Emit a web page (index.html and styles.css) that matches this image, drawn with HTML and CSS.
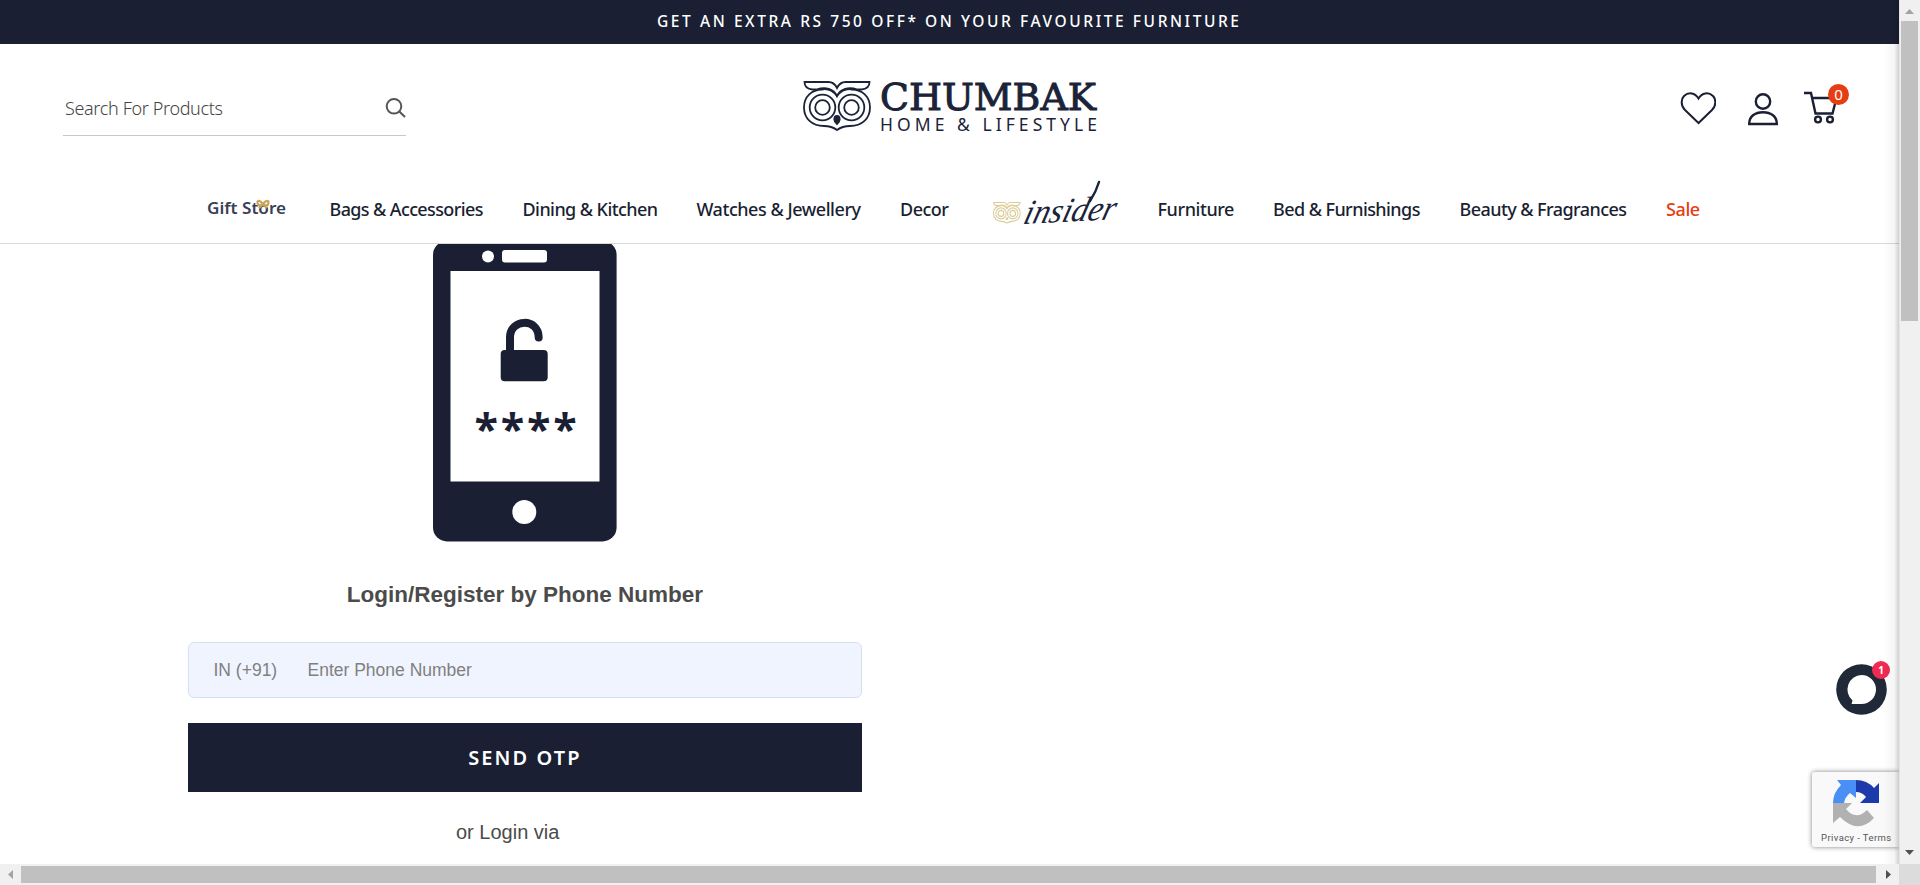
FILE: index.html
```html
<!DOCTYPE html>
<html lang="en">
<head>
<meta charset="utf-8">
<title>Chumbak - Login</title>
<link rel="stylesheet" href="styles.css">
</head>
<body>
<div class="frame">
  <div class="page">
    <div class="promo"><svg width="600" height="44"><text class="promo-text" x="7" y="27" textLength="582">GET AN EXTRA RS 750 OFF* ON YOUR FAVOURITE FURNITURE</text></svg></div>
    <header class="header">
      <div class="top-row">
        <div class="search">
          <span class="search-label">Search For Products</span>
          <svg class="search-icon" width="22" height="22" viewBox="0 0 22 22"><circle cx="10" cy="9.3" r="7.3"/><path d="M15.3 14.600L21 20"/></svg>
        </div>
        <svg class="logo" width="300" height="60" viewBox="800 76 300 60">
          <g class="owl">
            <path d="M804.5 82h24c4 0 7 3 8.500 6 1.500-3 4.500-6 8.500-6h24c0 5-3 7-8 7.500h-4c-9-3-17-1-20.500 6.500-3.500-7.500-11.500-9.500-20.500-6.500h-4c-5-.5-8-2.500-8-7.500z"/>
            <path d="M837 96c-4-5-10-7.500-15-6.500-10 0-18 7-18 18 0 11 8 18.500 20 18.500 6 0 9 1 13 4 4-3 7-4 13-4 12 0 20-7.500 20-18.500 0-11-8-18-18-18-5-1-11 1.500-15 6.500z"/>
            <circle cx="822.500" cy="107.500" r="12.800"/><circle cx="822.500" cy="107.500" r="7.300"/>
            <circle cx="851.500" cy="107.500" r="12.800"/><circle cx="851.500" cy="107.500" r="7.300"/>
            <path class="beak" d="M837 116c2 0 2.700 1.500 2.700 3.500s-1.500 3.500-2.700 4.500c-1.200-1-2.700-2.500-2.700-4.500s.7-3.500 2.700-3.500z"/>
          </g>
          <text class="brand" x="880" y="109.500" textLength="216" lengthAdjust="spacingAndGlyphs">CHUMBAK</text>
          <text class="tagline" x="880" y="130.500" textLength="217">HOME &amp; LIFESTYLE</text>
        </svg>
        <div class="actions">
          <svg width="36" height="34" viewBox="0 0 36 34"><path d="M18.500 32L5 19C.5 14.500 1 8 4 5 8.500 .8 15 1.500 18.500 7.500 22 1.500 28.500 .8 33 5c3 3 3.500 9.500-1 14z"/></svg>
          <svg class="user" width="30" height="34" viewBox="0 0 30 34"><circle cx="15" cy="8.500" r="7.200"/><path d="M1.200 31C1 23.500 7 19.200 15 19.200s14 4.300 13.800 11.800z"/></svg>
          <div class="cart">
            <svg width="36" height="34" viewBox="0 0 36 34"><path d="M0 2h7l4.500 20.500h17L32.500 7H8"/><circle cx="14" cy="28.500" r="2.900"/><circle cx="26" cy="28.500" r="2.900"/></svg>
            <span class="cart-count">0</span>
          </div>
        </div>
      </div>
      <nav class="nav">
        <svg class="gift" width="80" height="30" viewBox="0 0 80 30"><text x="0" y="19.500" textLength="79" lengthAdjust="spacingAndGlyphs">Gift Store</text><path d="M56 10c-3-4-6-4-5.500-1s3 3 5.500 1c3-4 6-4 5.500-1s-3 3-5.500 1l-4 4M56 10l4 4"/></svg>
        <a class="bags">Bags &amp; Accessories</a>
        <a class="dining">Dining &amp; Kitchen</a>
        <a class="watches">Watches &amp; Jewellery</a>
        <a class="decor">Decor</a>
        <svg class="insider" width="126" height="52" viewBox="992 178 126 52">
          <g class="mini-owl" transform="translate(993.5 201) scale(.405 .43) translate(-804 -81)">
            <path d="M804.5 82h24c4 0 7 3 8.500 6 1.500-3 4.500-6 8.500-6h24c0 5-3 7-8 7.500h-4c-9-3-17-1-20.500 6.500-3.500-7.500-11.500-9.500-20.500-6.500h-4c-5-.5-8-2.500-8-7.500z"/>
            <path d="M837 96c-4-5-10-7.500-15-6.500-10 0-18 7-18 18 0 11 8 18.500 20 18.500 6 0 9 1 13 4 4-3 7-4 13-4 12 0 20-7.500 20-18.500 0-11-8-18-18-18-5-1-11 1.500-15 6.500z"/>
            <circle cx="822.500" cy="107.500" r="12.800"/><circle cx="822.500" cy="107.500" r="7"/>
            <circle cx="851.500" cy="107.500" r="12.800"/><circle cx="851.500" cy="107.500" r="7"/>
            <circle cx="837" cy="120" r="2"/>
          </g>
          <text class="script" transform="translate(1022 223) skewX(-18) rotate(-3)" textLength="90" lengthAdjust="spacingAndGlyphs">insider</text>
          <path class="swash" d="M1090 200Q1096 191 1099 181"/>
        </svg>
        <a class="furniture">Furniture</a>
        <a class="bed">Bed &amp; Furnishings</a>
        <a class="beauty">Beauty &amp; Fragrances</a>
        <a class="sale">Sale</a>
      </nav>
    </header>
    <main class="login">
      <svg class="phone" width="184" height="298" viewBox="433 244 184 298">
        <rect x="433" y="241" width="183.600" height="300.400" rx="14"/>
        <path class="white" d="M450.500 271h149v210.500h-149z"/>
        <circle class="white" cx="488" cy="256.500" r="6"/>
        <rect class="white" x="502" y="250" width="45" height="12.500" rx="3"/>
        <circle class="white" cx="524.300" cy="512" r="12"/>
        <rect x="500.700" y="350" width="47" height="31.300" rx="4"/>
        <path class="shackle" d="M510 353V337.500c0-19 28.500-20 28.700 0"/>
        <text x="474.500 500.700 526.900 553.200" y="445">****</text>
      </svg>
      <h1>Login/Register by Phone Number</h1>
      <div class="field"><span class="code">IN (+91)</span><span>Enter Phone Number</span></div>
      <div class="send">SEND OTP</div>
      <p class="via">or Login via</p>
    </main>
    <aside class="floating">
      <div class="chat">
        <svg width="51" height="51" viewBox="0 0 51 51"><circle cx="25.500" cy="25.500" r="25.300"/><path d="M25.500 11a14.500 14.500 0 1 1 0 29H15.500l1-3.500A14.500 14.500 0 0 1 25.500 11z"/></svg>
        <span class="chat-count">1</span>
      </div>
      <div class="captcha">
        <svg width="48" height="48" viewBox="0 0 48 48">
          <path fill="#4a8ff5" d="M5 1h19v18l-6-5q-5 4-6 10H1Q1 14 9 6z"/>
          <path fill="#1c3aa9" d="M24 1q11 0 18 8l5-5v20H28l6-6q-4-5-10-5z"/>
          <path fill="#b1b1b1" d="M1 24h19l-6 6q10 12 21 1l7 8Q26 56 8 38l-7 6z"/>
        </svg>
        <span class="terms">Privacy - Terms</span>
      </div>
    </aside>
  </div>
  <div class="scroll-v">
    <svg width="21" height="21"><path fill="#a3a3a3" d="M5 14h9l-4.500-5z"/></svg>
    <div class="thumb-v"></div>
    <svg class="end" width="21" height="21"><path fill="#505050" d="M5 7h9l-4.500 5z"/></svg>
  </div>
  <div class="scroll-h">
    <svg width="21" height="21"><path fill="#a3a3a3" d="M13 6v9l-5-4.500z"/></svg>
    <div class="thumb-h"></div>
    <svg class="end" width="23" height="21"><path fill="#505050" d="M10 6v9l5-4.500z"/></svg>
  </div>
  <div class="corner"></div>
</div>
</body>
</html>
```
FILE: styles.css
```css
* { box-sizing: border-box; }
body { margin: 0; background: #fff; overflow: hidden; font-family: "Noto Sans", sans-serif; color: #1a1f33; }
svg { display: block; flex: none; }
.frame { display: grid; grid-template-columns: 1899px 21px; grid-template-rows: 864px 21px; width: 1920px; height: 885px; }
.page { position: relative; overflow: hidden; }
.page::after { content: ""; position: absolute; top: 0; right: 0; bottom: 0; width: 16px; background: linear-gradient(to right, rgba(0,0,0,0), rgba(0,0,0,.04) 70%, rgba(0,0,0,.18)); }
.promo { height: 44px; background: #1a1f33; display: flex; justify-content: center; }
.promo-text { fill: #fff; font-size: 15.500px; font-weight: 500; }
.header { height: 200px; border-bottom: 1px solid #d9d9d9; }
.top-row { height: 131px; display: grid; grid-template-columns: 800px 300px 1fr; padding-top: 32px; }
.search { margin: 14px 0 0 63px; width: 343px; height: 46px; border-bottom: 1px solid #c8c8c8; padding: 0 0 9px 2px; display: flex; align-items: center; justify-content: space-between; }
.search-label { font-size: 18px; font-weight: 300; color: #444; letter-spacing: -.35px; }
.search-icon { fill: none; stroke: #555; stroke-width: 2; }
.owl { fill: none; stroke: #1b2339; stroke-width: 1.800; }
.owl .beak { fill: #1b2339; }
.brand { font: 37.500px "DejaVu Serif", serif; fill: #1b2339; stroke: #1b2339; stroke-width: 1; }
.tagline { font-size: 17.500px; fill: #1b2339; }
.actions { display: flex; align-items: flex-start; padding: 15px 0 0 580px; fill: none; stroke: #1a1f33; stroke-width: 2; }
.user { margin: 2px 0 0 32px; stroke-width: 2.400; }
.cart { position: relative; margin: 0 0 0 26px; stroke-width: 2.400; }
.cart-count { position: absolute; left: 24px; top: -7px; width: 21px; height: 21px; border-radius: 50%; background: #e63e12; color: #fff; font-size: 15px; line-height: 21px; text-align: center; }
.nav { height: 68px; display: flex; align-items: center; padding-left: 207px; font-size: 18px; font-weight: 500; letter-spacing: -.57px; white-space: nowrap; }
.nav a { flex: none; }
.gift { margin: 0 42.500px 1px 0; letter-spacing: 0; }
.gift text { font-size: 16.500px; font-weight: 600; fill: #394055; }
.gift path { fill: none; stroke: #c9a55a; stroke-width: 2.200; }
.bags { width: 193px; letter-spacing: -.62px; }
.dining { width: 174px; }
.watches { width: 203.500px; letter-spacing: -.46px; }
.decor { width: 92px; letter-spacing: -.5px; }
.insider { margin: -8px 39.500px 0 0; overflow: visible; letter-spacing: 0; }
.mini-owl { fill: none; stroke: #dccb98; stroke-width: 2.500; }
.script { font: italic 35px "Liberation Serif", serif; fill: #1b2339; }
.swash { fill: none; stroke: #1b2339; stroke-width: 2.400; stroke-linecap: round; }
.furniture { width: 115.500px; letter-spacing: -.42px; }
.bed { width: 186.500px; }
.beauty { width: 206.500px; }
.sale { color: #e63e12; letter-spacing: -.4px; }
.login { margin-left: 188px; width: 674px; font-family: "Liberation Sans", sans-serif; color: #4b4b4b; }
.phone { margin-left: 245px; fill: #1a1f33; }
.phone .white { fill: #fff; }
.phone .shackle { fill: none; stroke: #1a1f33; stroke-width: 8; stroke-linecap: round; }
.phone text { font: bold 43px "Open Sans", sans-serif; }
h1 { margin: 39px 0 0; font-size: 22.500px; line-height: 28px; text-align: center; }
.field { margin-top: 33px; height: 56px; border: 1px solid #d8dff2; border-radius: 6px; background: #f0f4ff; padding-left: 24.500px; display: flex; align-items: center; font-size: 17.500px; color: #808080; }
.code { width: 94px; }
.send { margin-top: 25px; height: 69px; background: #1a1f33; color: #fff; font: 600 20px/69px "Noto Sans", sans-serif; letter-spacing: 2.100px; text-align: center; }
.via { margin: 28px 0 0 268px; font-size: 20px; line-height: 24px; }
.floating { position: absolute; right: 0; top: 664px; width: 87px; }
.chat { position: relative; margin-left: 24px; width: 51px; height: 51px; }
.chat circle { fill: #1f2937; }
.chat path { fill: #fff; }
.chat-count { position: absolute; left: 36px; top: -3px; width: 18px; height: 18px; border-radius: 50%; background: #ef2b53; color: #fff; font: bold 10px/18px "Noto Sans", sans-serif; text-align: center; }
.captcha { margin-top: 57px; height: 75px; background: #f9f9f9; border-radius: 3px 0 0 3px; box-shadow: 0 0 5px #808080; padding: 7px 0 0 20px; }
.terms { display: block; margin: 4px 0 0 -11px; font: 9.500px/14px Roboto, sans-serif; letter-spacing: .4px; color: #555; white-space: nowrap; }
.scroll-v { background: #f0f0f0; border-left: 1px solid #e3e3e3; display: flex; flex-direction: column; }
.scroll-h { background: #f0f0f0; display: flex; }
.thumb-v { margin-left: 1px; width: 17px; height: 300px; background: #c0c0c0; }
.thumb-h { margin-top: 2px; width: 1855px; height: 17px; background: #c0c0c0; }
.scroll-v .end { margin-top: auto; }
.corner { background: #dcdcdc; }
```
